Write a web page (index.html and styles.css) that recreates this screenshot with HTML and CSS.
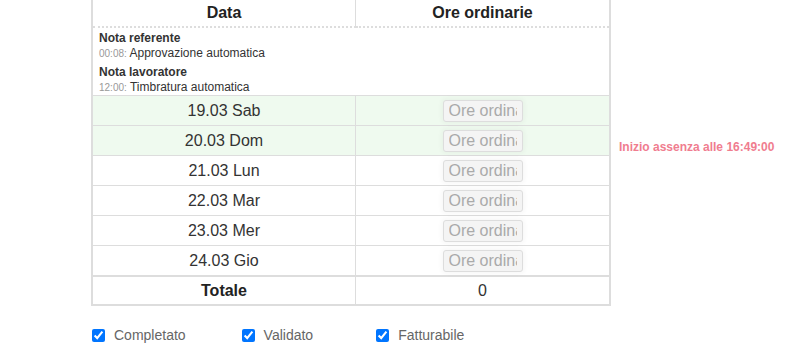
FILE: index.html
```html
<!DOCTYPE html>
<html lang="it">
<head>
<meta charset="utf-8">
<link rel="stylesheet" href="styles.css">
</head>
<body>
<div class="page">
  <table class="grid">
    <thead>
      <tr>
        <th class="c1">Data</th>
        <th class="c2">Ore ordinarie</th>
        <th class="side"></th>
      </tr>
    </thead>
    <tbody>
      <tr class="notes">
        <td colspan="2" class="notecell">
          <div class="note">
            <div class="note-title">Nota referente</div>
            <div class="note-line"><span class="time">00:08:</span> Approvazione automatica</div>
          </div>
          <div class="note">
            <div class="note-title">Nota lavoratore</div>
            <div class="note-line"><span class="time">12:00:</span> Timbratura automatica</div>
          </div>
        </td>
        <td class="side"></td>
      </tr>
      <tr class="day weekend">
        <td class="c1">19.03 Sab</td>
        <td class="c2"><input class="hours" type="text" placeholder="Ore ordinarie" disabled></td>
        <td class="side"></td>
      </tr>
      <tr class="day weekend">
        <td class="c1">20.03 Dom</td>
        <td class="c2"><input class="hours" type="text" placeholder="Ore ordinarie" disabled></td>
        <td class="side"><span class="msg">Inizio assenza alle 16:49:00</span></td>
      </tr>
      <tr class="day">
        <td class="c1">21.03 Lun</td>
        <td class="c2"><input class="hours" type="text" placeholder="Ore ordinarie" disabled></td>
        <td class="side"></td>
      </tr>
      <tr class="day">
        <td class="c1">22.03 Mar</td>
        <td class="c2"><input class="hours" type="text" placeholder="Ore ordinarie" disabled></td>
        <td class="side"></td>
      </tr>
      <tr class="day">
        <td class="c1">23.03 Mer</td>
        <td class="c2"><input class="hours" type="text" placeholder="Ore ordinarie" disabled></td>
        <td class="side"></td>
      </tr>
      <tr class="day">
        <td class="c1">24.03 Gio</td>
        <td class="c2"><input class="hours" type="text" placeholder="Ore ordinarie" disabled></td>
        <td class="side"></td>
      </tr>
      <tr class="total">
        <td class="c1 total-label">Totale</td>
        <td class="c2">0</td>
        <td class="side"></td>
      </tr>
    </tbody>
  </table>

  <div class="checks">
    <label class="check check-a"><input type="checkbox" checked><span>Completato</span></label>
    <label class="check check-b"><input type="checkbox" checked><span>Validato</span></label>
    <label class="check"><input type="checkbox" checked><span>Fatturabile</span></label>
  </div>
</div>
</body>
</html>
```
FILE: styles.css
```css
html, body {
  margin: 0;
  padding: 0;
  background: #ffffff;
}

.page {
  font-family: "Liberation Sans", Arial, sans-serif;
  color: #333333;
  padding-left: 91px;
}

.grid {
  border-collapse: collapse;
  border-spacing: 0;
}

.grid th,
.grid td {
  padding: 0;
  text-align: center;
  vertical-align: middle;
}

.grid .c1 {
  width: 262px;
  border-left: 2px solid #dddddd;
  border-right: 1px solid #dddddd;
}

.grid .c2 {
  width: 253px;
  border-right: 2px solid #dddddd;
}

.grid .side {
  border: none;
  text-align: left;
  padding-left: 8px;
  white-space: nowrap;
}

.grid thead th {
  height: 25px;
  font-size: 16px;
  font-weight: bold;
  color: #222222;
  border-bottom: 2px dotted #dddddd;
  padding-bottom: 1px;
}

.grid thead th.side {
  border-bottom: none;
}

.notecell {
  border-left: 2px solid #dddddd;
  border-right: 2px solid #dddddd;
  border-bottom: 1px solid #dddddd;
  text-align: left !important;
  padding: 3px 6px 0 6px !important;
  height: 0;
}

.note + .note {
  margin-top: 4px;
}

.note-title {
  font-size: 12px;
  font-weight: bold;
  color: #333333;
  line-height: 15px;
}

.note-line {
  font-size: 12px;
  color: #333333;
  line-height: 15px;
}

.note + .note .note-line {
  line-height: 14px;
}

.time {
  font-size: 10px;
  color: #999999;
}

.day td.c1,
.day td.c2 {
  height: 29px;
  border-bottom: 1px solid #dddddd;
  font-size: 16px;
  color: #333333;
}

.weekend td.c1,
.weekend td.c2 {
  background: #effaef;
}

.hours {
  box-sizing: border-box;
  width: 80px;
  height: 22px;
  margin: 0;
  padding: 0 5px;
  border: 1px solid #dddddd;
  border-radius: 3px;
  background: #f4f4f4;
  font-family: "Liberation Sans", Arial, sans-serif;
  font-size: 16px;
  color: #aaaaaa;
  box-shadow: 0 0 4px 2px rgba(0, 0, 0, 0.03);
  vertical-align: middle;
}

.hours::placeholder {
  color: #aaaaaa;
  opacity: 1;
}

.msg {
  font-size: 12px;
  font-weight: bold;
  color: #f07d8f;
  position: relative;
  top: 5px;
}

.total td.c1,
.total td.c2 {
  height: 27px;
  border-top: 2px solid #dddddd;
  border-bottom: 2px solid #dddddd;
  font-size: 16px;
  color: #333333;
}

.total-label {
  font-weight: bold;
  color: #222222 !important;
}

.checks {
  display: flex;
  align-items: center;
  padding-left: 1px;
  margin-top: 21px;
  font-size: 14px;
  color: #666666;
}

.check {
  display: flex;
  align-items: center;
  margin-right: 56px;
}

.check-b {
  margin-right: 63px;
}

.check input {
  width: 13px;
  height: 13px;
  margin: 0 9px 0 0;
  accent-color: #0075ff;
}
```
